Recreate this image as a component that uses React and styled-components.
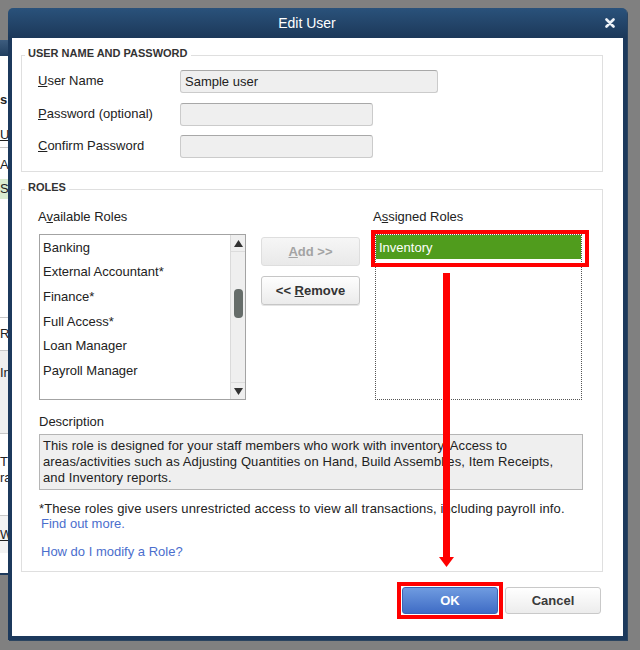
import React from 'react'
import styled, { createGlobalStyle } from 'styled-components'

const GlobalStyle = createGlobalStyle`
  *, *::before, *::after { box-sizing: border-box; }
  html, body { margin: 0; padding: 0; }
  body {
    font-family: "Liberation Sans", Arial, sans-serif;
    font-size: 13px;
    color: #222;
    background: #808080;
  }
`

const Desktop = styled.div`
  position: relative;
  width: 640px;
  height: 650px;
  overflow: hidden;
  background: #808080;
`

/* window peeking out behind the dialog */
const BackWindow = styled.div`
  position: absolute;
  left: -2px;
  top: 40px;
  width: 14px;
  height: 535px;
  overflow: hidden;
  background: #fff;
  display: flex;
  flex-direction: column;
  border-bottom: 2px solid #1d3a5c;
`

const BackHeader = styled.div`
  height: 16px;
  flex-shrink: 0;
  background: linear-gradient(#3d5c7e, #213f60);
`

const BackRow = styled.div`
  height: ${p => p.$h}px;
  flex-shrink: 0;
  padding: ${p => p.$pt || 0}px 0 0 2px;
  display: flex;
  flex-direction: column;
  justify-content: ${p => (p.$pt ? 'flex-start' : 'center')};
  background: ${p => p.$bg || 'transparent'};
  border-bottom: ${p => (p.$line ? '1px solid #c8c8c8' : '0')};
  font-weight: ${p => (p.$bold ? 'bold' : 'normal')};
  text-decoration: ${p => (p.$u ? 'underline' : 'none')};
  line-height: 16px;
  white-space: nowrap;
`

const Dialog = styled.div`
  position: absolute;
  left: 8px;
  top: 8px;
  width: 619px;
  height: 632px;
  padding: 0 4px 4px;
  display: flex;
  flex-direction: column;
  border-radius: 5px 5px 0 0;
  background: linear-gradient(to bottom, #2a527b 0, #1c3859 30px, #1c395c 30px);
  box-shadow: 1px 1px 0 #2b4460;
`

const TitleBar = styled.div`
  height: 30px;
  flex-shrink: 0;
  display: flex;
  align-items: center;
`

const Title = styled.div`
  flex: 1;
  text-align: center;
  color: #fff;
  font-size: 14px;
`

const Close = styled.div`
  width: 21px;
  padding-left: 3px;
  display: flex;
  align-items: center;
`

const Body = styled.div`
  flex: 1;
  background: #fff;
  padding: 17px 20px 0 9px;
  display: flex;
  flex-direction: column;
`

const Group = styled.section`
  border: 1px solid #dfdfdf;
  margin-top: ${p => p.$mt || 0}px;
  padding: 0 19px ${p => p.$pb}px ${p => p.$pl}px;
  display: flex;
  flex-direction: column;
`

const Legend = styled.div`
  align-self: flex-start;
  margin: -10px 0 0 ${p => 3 - p.$pl}px;
  padding: 0 3px;
  background: #fff;
  font-size: 11px;
  font-weight: bold;
  line-height: 14px;
  color: #333;
`

const FormRows = styled.div`
  margin-top: 10px;
  display: flex;
  flex-direction: column;
  gap: 9.5px;
`

const FormRow = styled.div`
  height: 23px;
  display: flex;
  align-items: center;
`

const Label = styled.label`
  width: 142px;
  margin-top: -2px;
  color: #222;
`

const TextBox = styled.input`
  width: ${p => p.$w}px;
  height: 23px;
  padding: 0 4px;
  font: 13px "Liberation Sans", Arial, sans-serif;
  color: #222;
  background: #efefef;
  border: 1px solid #cbcbcb;
  border-top-color: #a8a8a8;
  border-radius: 3px;
  outline: none;
`

const RolesGrid = styled.div`
  margin-top: 15px;
  display: flex;
`

const Column = styled.div`
  width: ${p => p.$w}px;
  margin-left: ${p => p.$ml || 0}px;
  display: flex;
  flex-direction: column;
`

const Caption = styled.div`
  line-height: 16px;
  margin: ${p => p.$mt || 0}px 0 0 ${p => p.$ml || 0}px;
  color: #222;
`

const ListBox = styled.div`
  width: 207px;
  height: 166px;
  margin: 9px 0 0 ${p => p.$ml || 0}px;
  display: flex;
  background: #fff;
  border: 1px ${p => (p.$dotted ? 'dotted #555' : 'solid #a3a3a3')};
`

const Items = styled.div`
  flex: 1;
  display: flex;
  flex-direction: column;
`

const Item = styled.div`
  height: ${p => (p.$selected ? 24 : 24.6)}px;
  flex-shrink: 0;
  display: flex;
  align-items: center;
  padding-left: 3px;
  white-space: nowrap;
  color: ${p => (p.$selected ? '#fff' : '#222')};
  background: ${p => (p.$selected ? '#509c1d' : 'transparent')};
`

const Scrollbar = styled.div`
  width: 15px;
  display: flex;
  flex-direction: column;
  background: #efefef;
  border-left: 1px solid #dadada;
`

const ScrollArrow = styled.div`
  height: 16px;
  display: flex;
  align-items: center;
  justify-content: center;
`

const Track = styled.div`
  flex: 1;
  display: flex;
  justify-content: center;
  border-top: 1px solid #dcdcdc;
  border-bottom: 1px solid #dcdcdc;
`

const Thumb = styled.div`
  width: 9px;
  height: 29px;
  border-radius: 4px;
  background: #666d6a;
`

const ButtonColumn = styled.div`
  width: 99px;
  margin-left: 15px;
  padding-top: 28px;
  display: flex;
  flex-direction: column;
  gap: 10px;
`

const SideButton = styled.div`
  height: 29px;
  display: flex;
  align-items: center;
  justify-content: center;
  border-radius: 3px;
  font-weight: bold;
  color: ${p => (p.$disabled ? '#a3a3a3' : '#333')};
  border: 1px solid ${p => (p.$disabled ? '#dedede' : '#c6c6c6')};
  background: ${p =>
    p.$disabled
      ? 'linear-gradient(#f6f6f6, #e9e9e9)'
      : 'linear-gradient(#fefefe, #ebebeb)'};
  box-shadow: ${p => (p.$disabled ? 'none' : '0 1px 0 #e4e4e4')};
`

const DescBox = styled.div`
  width: 544px;
  height: 56px;
  margin-top: 4px;
  padding: 3px 3px 0 3px;
  line-height: 16px;
  letter-spacing: 0.1px;
  white-space: nowrap;
  background: #efefef;
  border: 1px solid #b5b5b5;
  color: #222;
`

const Note = styled.div`
  margin-top: 11px;
  line-height: 15px;
  letter-spacing: 0.12px;
  color: #222;
`

const Link = styled.a`
  display: inline-block;
  color: #4b6ecd;
  text-decoration: none;
  letter-spacing: 0;
  margin-top: ${p => p.$mt || 0}px;
  line-height: ${p => p.$lh || 15}px;
  padding-left: 2px;
  cursor: pointer;
`

const Footer = styled.div`
  margin: 15px 2px 0 0;
  display: flex;
  justify-content: flex-end;
  gap: 7px;
`

const DialogButton = styled.div`
  width: 96px;
  height: 27px;
  display: flex;
  align-items: center;
  justify-content: center;
  border-radius: 3px;
  font-weight: bold;
  color: ${p => (p.$primary ? '#fff' : '#3a3a3a')};
  border: 1px solid ${p => (p.$primary ? '#3b64b4' : '#c9c9c9')};
  background: ${p =>
    p.$primary
      ? 'linear-gradient(#6f9be0, #3f6cc5)'
      : 'linear-gradient(#ffffff, #ececec)'};
`

/* red annotations drawn over the screenshot */
const Callout = styled.div`
  position: absolute;
  border: 4px solid #ff0000;
  pointer-events: none;
`

const ArrowSvg = styled.svg`
  position: absolute;
  left: 439px;
  top: 273px;
  pointer-events: none;
`

const availableRoles = [
  'Banking',
  'External Accountant*',
  'Finance*',
  'Full Access*',
  'Loan Manager',
  'Payroll Manager',
]

const Triangle = ({ down }) => (
  <svg width="9" height="7" viewBox="0 0 9 7">
    <polygon points={down ? '0,0 9,0 4.5,7' : '0,7 9,7 4.5,0'} fill="#333" />
  </svg>
)

const App = () => {
  return (
    <Desktop>
      <GlobalStyle />

      <BackWindow>
        <BackHeader />
        <BackRow $h={34} />
        <BackRow $h={20} $bold>s</BackRow>
        <BackRow $h={13} />
        <BackRow $h={25} $u $line>Us</BackRow>
        <BackRow $h={3} />
        <BackRow $h={28}>Ac</BackRow>
        <BackRow $h={20} $bg="#d9ecd0">S</BackRow>
        <BackRow $h={119} $line />
        <BackRow $h={33} $line>Ro</BackRow>
        <BackRow $h={83} $pt={14} $bg="#efefef" $line>In</BackRow>
        <BackRow $h={82} $pt={20} $line>
          <span>T</span>
          <span>ra</span>
        </BackRow>
        <BackRow $h={37} $pt={11} $bg="#f3f3f3" $u>W</BackRow>
        <BackRow $h={20} />
      </BackWindow>

      <Dialog>
        <TitleBar>
          <Title>Edit User</Title>
          <Close>
            <svg width="10" height="10" viewBox="0 0 10 10">
              <path d="M1.5 1.5 L8.5 8.5 M8.5 1.5 L1.5 8.5" stroke="#eef2f7" strokeWidth="2.6" strokeLinecap="round" />
            </svg>
          </Close>
        </TitleBar>

        <Body>
          <Group $pl={16} $pb={13}>
            <Legend $pl={16}>USER NAME AND PASSWORD</Legend>
            <FormRows>
              <FormRow>
                <Label><u>U</u>ser Name</Label>
                <TextBox $w={258} defaultValue="Sample user" readOnly />
              </FormRow>
              <FormRow>
                <Label><u>P</u>assword (optional)</Label>
                <TextBox $w={193} type="password" readOnly />
              </FormRow>
              <FormRow>
                <Label><u>C</u>onfirm Password</Label>
                <TextBox $w={193} type="password" readOnly />
              </FormRow>
            </FormRows>
          </Group>

          <Group $mt={17} $pl={17} $pb={11}>
            <Legend $pl={17}>ROLES</Legend>
            <RolesGrid>
              <Column $w={207}>
                <Caption $ml={-1}>A<u>v</u>ailable Roles</Caption>
                <ListBox>
                  <Items>
                    {availableRoles.map(role => (
                      <Item key={role}>{role}</Item>
                    ))}
                  </Items>
                  <Scrollbar>
                    <ScrollArrow><Triangle /></ScrollArrow>
                    <Track>
                      <Thumb style={{ marginTop: 37 }} />
                    </Track>
                    <ScrollArrow><Triangle down /></ScrollArrow>
                  </Scrollbar>
                </ListBox>
              </Column>

              <ButtonColumn>
                <SideButton $disabled><span><u>A</u>dd &gt;&gt;</span></SideButton>
                <SideButton><span>&lt;&lt; <u>R</u>emove</span></SideButton>
              </ButtonColumn>

              <Column $w={210} $ml={13}>
                <Caption>A<u>s</u>signed Roles</Caption>
                <ListBox $dotted $ml={2}>
                  <Items>
                    <Item $selected>Inventory</Item>
                  </Items>
                </ListBox>
              </Column>
            </RolesGrid>

            <Caption $mt={14}>Description</Caption>
            <DescBox>
              This role is designed for your staff members who work with inventory. Access to
              <br />
              areas/activities such as Adjusting Quantities on Hand, Build Assemblies, Item Receipts,
              <br />
              and Inventory reports.
            </DescBox>

            <Note>
              *These roles give users unrestricted access to view all transactions, including payroll info.
              <br />
              <Link>Find out more.</Link>
            </Note>
            <div>
              <Link $mt={13} $lh={16}>How do I modify a Role?</Link>
            </div>
          </Group>

          <Footer>
            <DialogButton $primary>OK</DialogButton>
            <DialogButton>Cancel</DialogButton>
          </Footer>
        </Body>
      </Dialog>

      <Callout style={{ left: 371, top: 230, width: 218, height: 37 }} />
      <Callout style={{ left: 397, top: 582, width: 106, height: 37 }} />
      <ArrowSvg width="16" height="295" viewBox="0 0 16 295">
        <rect x="4" y="0" width="7" height="287" fill="#ff0000" />
        <polygon points="0,284 15,284 7.5,294" fill="#ff0000" />
      </ArrowSvg>
    </Desktop>
  )
}

export default App
